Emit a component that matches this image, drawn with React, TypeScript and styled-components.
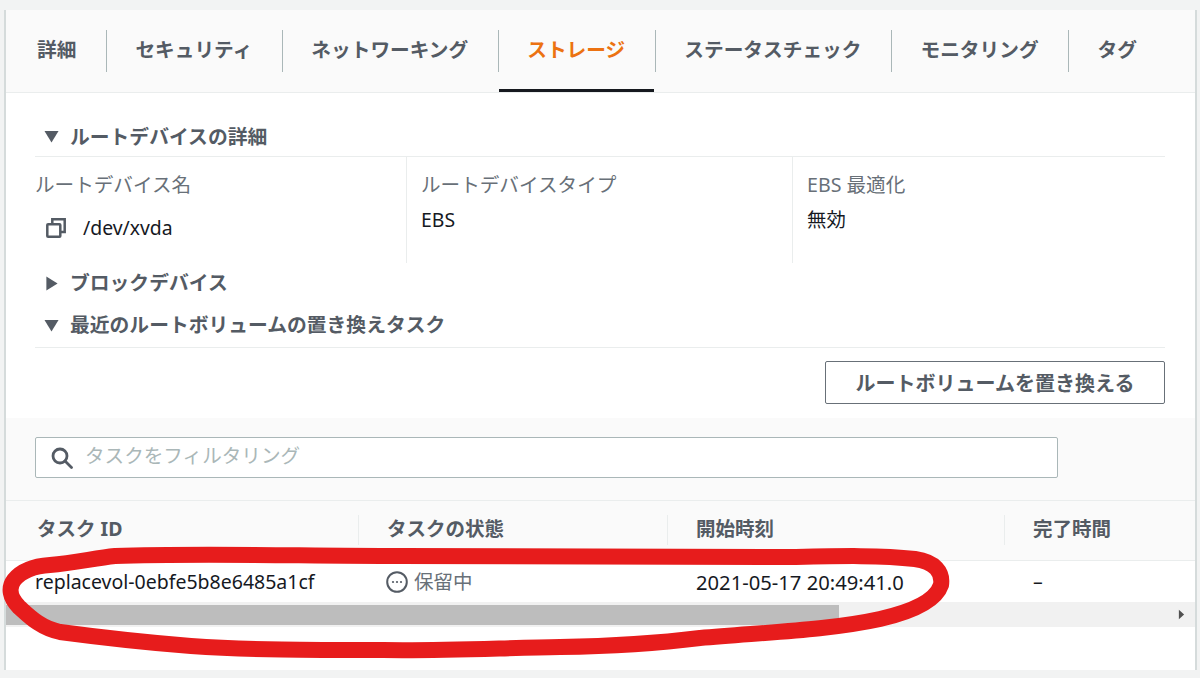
import React from 'react'
import styled, {createGlobalStyle} from 'styled-components'

const tabs = ['詳細', 'セキュリティ', 'ネットワーキング', 'ストレージ', 'ステータスチェック', 'モニタリング', 'タグ']

const GlobalStyle = createGlobalStyle`
  html, body {
    margin: 0;
    padding: 0;
    background: #f2f3f3;
    overflow: hidden;
  }
  body {
    font-family: "Noto Sans", "Noto Sans CJK JP", sans-serif;
  }
`

export default function App(): JSX.Element {
  return (
    <Page>
      <GlobalStyle />
      <Panel>
        <TabBar>
          {tabs.map((tab, i) => (
            <Tab key={tab} $active={tab === 'ストレージ'} $first={i === 0}>
              {tab}
            </Tab>
          ))}
        </TabBar>

        <Content>
          <SectionTitle $height={64} $top={24} $line>
            <Caret $open />
            ルートデバイスの詳細
          </SectionTitle>

          <Columns>
            <Column>
              <Label>ルートデバイス名</Label>
              <DeviceValue>
                <CopyIcon />
                /dev/xvda
              </DeviceValue>
            </Column>
            <Column $divider>
              <Label>ルートデバイスタイプ</Label>
              <Value>EBS</Value>
            </Column>
            <Column $divider>
              <Label>EBS 最適化</Label>
              <Value>無効</Value>
            </Column>
          </Columns>

          <SectionTitle $height={40}>
            <Caret />
            ブロックデバイス
          </SectionTitle>
          <SectionTitle $height={45} $line>
            <Caret $open />
            最近のルートボリュームの置き換えタスク
          </SectionTitle>

          <Actions>
            <ReplaceButton>ルートボリュームを置き換える</ReplaceButton>
          </Actions>
        </Content>

        <FilterBar>
          <FilterBox>
            <SearchIcon />
            <Placeholder>タスクをフィルタリング</Placeholder>
          </FilterBox>
        </FilterBar>

        <HeaderRow>
          <HeaderCell>タスク ID</HeaderCell>
          <HeaderCell>タスクの状態</HeaderCell>
          <HeaderCell>開始時刻</HeaderCell>
          <HeaderCell>完了時間</HeaderCell>
        </HeaderRow>
        <BodyRow>
          <BodyCell>replacevol-0ebfe5b8e6485a1cf</BodyCell>
          <BodyCell>
            <Status>
              <PendingIcon />
              保留中
            </Status>
          </BodyCell>
          <DateCell>2021-05-17 20:49:41.0</DateCell>
          <BodyCell>–</BodyCell>
        </BodyRow>
        <ScrollTrack>
          <ScrollThumb />
          <ScrollArrow viewBox="0 0 8 12">
            <path d="M1 0.5 L7 6 L1 11.5 Z" fill="#505050" />
          </ScrollArrow>
        </ScrollTrack>
      </Panel>

      <Annotation viewBox="0 0 1200 678">
        <path
          d="M115 556 C200 553 300 556 400 556 C520 557 640 557 790 557 C840 556 880 555 915 559 C935 562 943 572 941 585 C936 600 915 611 880 619 C830 630 770 632 700 638 C660 643 620 646 560 647 C500 648 440 651 383 650 C310 650 250 650 191 646 C140 642 90 636 60 632 C40 628 28 615 19 607 C10 598 8 588 14 580 C22 570 35 566 50 565 C75 563 95 558 115 556 Z"
          fill="none"
          stroke="#e71c1c"
          strokeWidth={16}
          strokeLinejoin="round"
        />
      </Annotation>
    </Page>
  )
}

function Caret({$open}: {$open?: boolean}): JSX.Element {
  return (
    <CaretSvg viewBox="0 0 16 16">
      <path d={$open ? 'M0.5 2 H15.5 L8 14.5 Z' : 'M2.5 0.5 L14.5 8 L2.5 15.5 Z'} fill="#545b64" />
    </CaretSvg>
  )
}

function CopyIcon(): JSX.Element {
  return (
    <IconSvg width={20} height={20} viewBox="0 0 20 20" fill="none" stroke="#545b64" strokeWidth={2.5}>
      <rect x="1.3" y="6.3" width="13" height="12.4" rx="0.8" />
      <path d="M6.3 6.3 V1.3 H18.7 V14 H14.3" />
    </IconSvg>
  )
}

function SearchIcon(): JSX.Element {
  return (
    <IconSvg width={22} height={22} viewBox="0 0 22 22" fill="none" stroke="#545b64" strokeWidth={2.8}>
      <circle cx="9" cy="9" r="7" />
      <path d="M14 14 L20.5 20.5" strokeLinecap="round" />
    </IconSvg>
  )
}

function PendingIcon(): JSX.Element {
  return (
    <IconSvg width={22} height={22} viewBox="0 0 22 22" fill="none" stroke="#545b64" strokeWidth={2}>
      <circle cx="11" cy="11" r="9.8" />
      <circle cx="7" cy="11" r="1.1" fill="#545b64" stroke="none" />
      <circle cx="11" cy="11" r="1.1" fill="#545b64" stroke="none" />
      <circle cx="15" cy="11" r="1.1" fill="#545b64" stroke="none" />
    </IconSvg>
  )
}

const Page = styled.div`
  position: relative;
  width: 1200px;
  height: 678px;
  padding: 10px 3px 8px 4px;
  box-sizing: border-box;
  background: #f2f3f3;
`

const Panel = styled.div`
  height: 660px;
  box-sizing: border-box;
  background: #fff;
  border-left: 2px solid #d5dbdb;
  border-right: 2px solid #d5dbdb;
  display: flex;
  flex-direction: column;
`

const TabBar = styled.div`
  height: 83px;
  flex: none;
  box-sizing: border-box;
  display: flex;
  background: #fafafa;
  border-bottom: 1px solid #eaeded;
`

const Tab = styled.div<{$active?: boolean; $first?: boolean}>`
  position: relative;
  display: flex;
  align-items: center;
  height: 79px;
  padding: 0 29.5px 0 ${p => (p.$first ? '31px' : '29.5px')};
  font-size: 19.7px;
  font-weight: 700;
  line-height: 80px;
  color: ${p => (p.$active ? '#ec7211' : '#545b64')};

  &::before {
    content: '';
    display: ${p => (p.$first ? 'none' : 'block')};
    position: absolute;
    left: 0;
    top: 20px;
    height: 42px;
    width: 1px;
    background: #aab7b8;
  }

  ${p =>
    p.$active &&
    `
    &::after {
      content: '';
      position: absolute;
      left: 1px;
      right: 1px;
      bottom: -3px;
      height: 3px;
      background: #16191f;
    }
  `}
`

const Content = styled.div`
  flex: none;
  height: 325px;
  padding: 0 30px 0 29px;
`

const SectionTitle = styled.div<{$height: number; $top?: number; $line?: boolean}>`
  height: ${p => p.$height}px;
  box-sizing: border-box;
  display: flex;
  align-items: center;
  padding-top: ${p => p.$top ?? 0}px;
  padding-left: 9px;
  gap: 11px;
  font-size: 19.8px;
  font-weight: 700;
  line-height: 28px;
  color: #545b64;
  border-bottom: ${p => (p.$line ? '1px solid #eaeded' : 'none')};
`

const CaretSvg = styled.svg`
  width: 15px;
  height: 15px;
  flex: none;
`

const Columns = styled.div`
  display: grid;
  grid-template-columns: 371px 386px 1fr;
  height: 106px;
`

const Column = styled.div<{$divider?: boolean}>`
  padding: 14px 0 0 ${p => (p.$divider ? '14px' : '0')};
  border-left: ${p => (p.$divider ? '1px solid #eaeded' : 'none')};
`

const Label = styled.div`
  font-size: 19.6px;
  line-height: 28px;
  color: #687078;
`

const Value = styled.div`
  margin-top: 7px;
  font-size: 19.4px;
  line-height: 28px;
  color: #16191f;
`

const DeviceValue = styled(Value)`
  display: flex;
  align-items: center;
  gap: 17px;
  margin-top: 15px;
  padding-left: 11px;
`

const IconSvg = styled.svg`
  flex: none;
`

const Actions = styled.div`
  display: flex;
  justify-content: flex-end;
  padding-top: 13px;
`

const ReplaceButton = styled.button`
  width: 340px;
  height: 43px;
  box-sizing: border-box;
  border: 1px solid #687078;
  border-radius: 2px;
  background: #fff;
  color: #545b64;
  font-family: inherit;
  font-size: 20px;
  font-weight: 700;
  padding: 0;
`

const FilterBar = styled.div`
  flex: none;
  height: 83px;
  box-sizing: border-box;
  padding: 19px 0 0 29px;
  background: #fafafa;
  border-bottom: 1px solid #eaeded;
`

const FilterBox = styled.div`
  width: 1023px;
  height: 41px;
  box-sizing: border-box;
  display: flex;
  align-items: center;
  gap: 12px;
  padding-left: 15px;
  background: #fff;
  border: 1px solid #aab7b8;
  border-radius: 2px;
`

const Placeholder = styled.span`
  font-size: 19.6px;
  line-height: 28px;
  padding-bottom: 4px;
  color: #aab7b8;
`

const tableColumns = '352px 309px 337px 1fr'

const HeaderRow = styled.div`
  flex: none;
  height: 60px;
  box-sizing: border-box;
  display: grid;
  grid-template-columns: ${tableColumns};
  background: #fafafa;
  border-bottom: 1px solid #eaeded;
`

const HeaderCell = styled.div`
  position: relative;
  padding: 14px 0 0 29px;
  font-size: 19.5px;
  font-weight: 700;
  line-height: 28px;
  color: #545b64;

  &:first-child {
    padding-left: 31px;
  }

  &:not(:first-child)::before {
    content: '';
    position: absolute;
    left: 0;
    top: 14px;
    height: 30px;
    width: 1px;
    background: #eaeded;
  }
`

const BodyRow = styled.div`
  flex: none;
  height: 41px;
  display: grid;
  grid-template-columns: ${tableColumns};
`

const BodyCell = styled.div`
  padding-left: 29px;
  font-size: 19.5px;
  line-height: 42px;
  color: #16191f;
`

const DateCell = styled(BodyCell)`
  font-size: 20.2px;
`

const Status = styled.span`
  display: flex;
  align-items: center;
  gap: 6px;
  height: 42px;
  margin-left: -1px;
  color: #687078;
`

const ScrollTrack = styled.div`
  position: relative;
  flex: none;
  height: 25px;
  background: #f1f1f1;
`

const ScrollThumb = styled.div`
  position: absolute;
  left: 0;
  top: 3px;
  width: 833px;
  height: 20px;
  background: #bdbdbd;
`

const ScrollArrow = styled.svg`
  position: absolute;
  right: 10px;
  top: 7px;
  width: 7px;
  height: 11px;
`

const Annotation = styled.svg`
  position: absolute;
  left: 0;
  top: 0;
  width: 1200px;
  height: 678px;
  pointer-events: none;
`
